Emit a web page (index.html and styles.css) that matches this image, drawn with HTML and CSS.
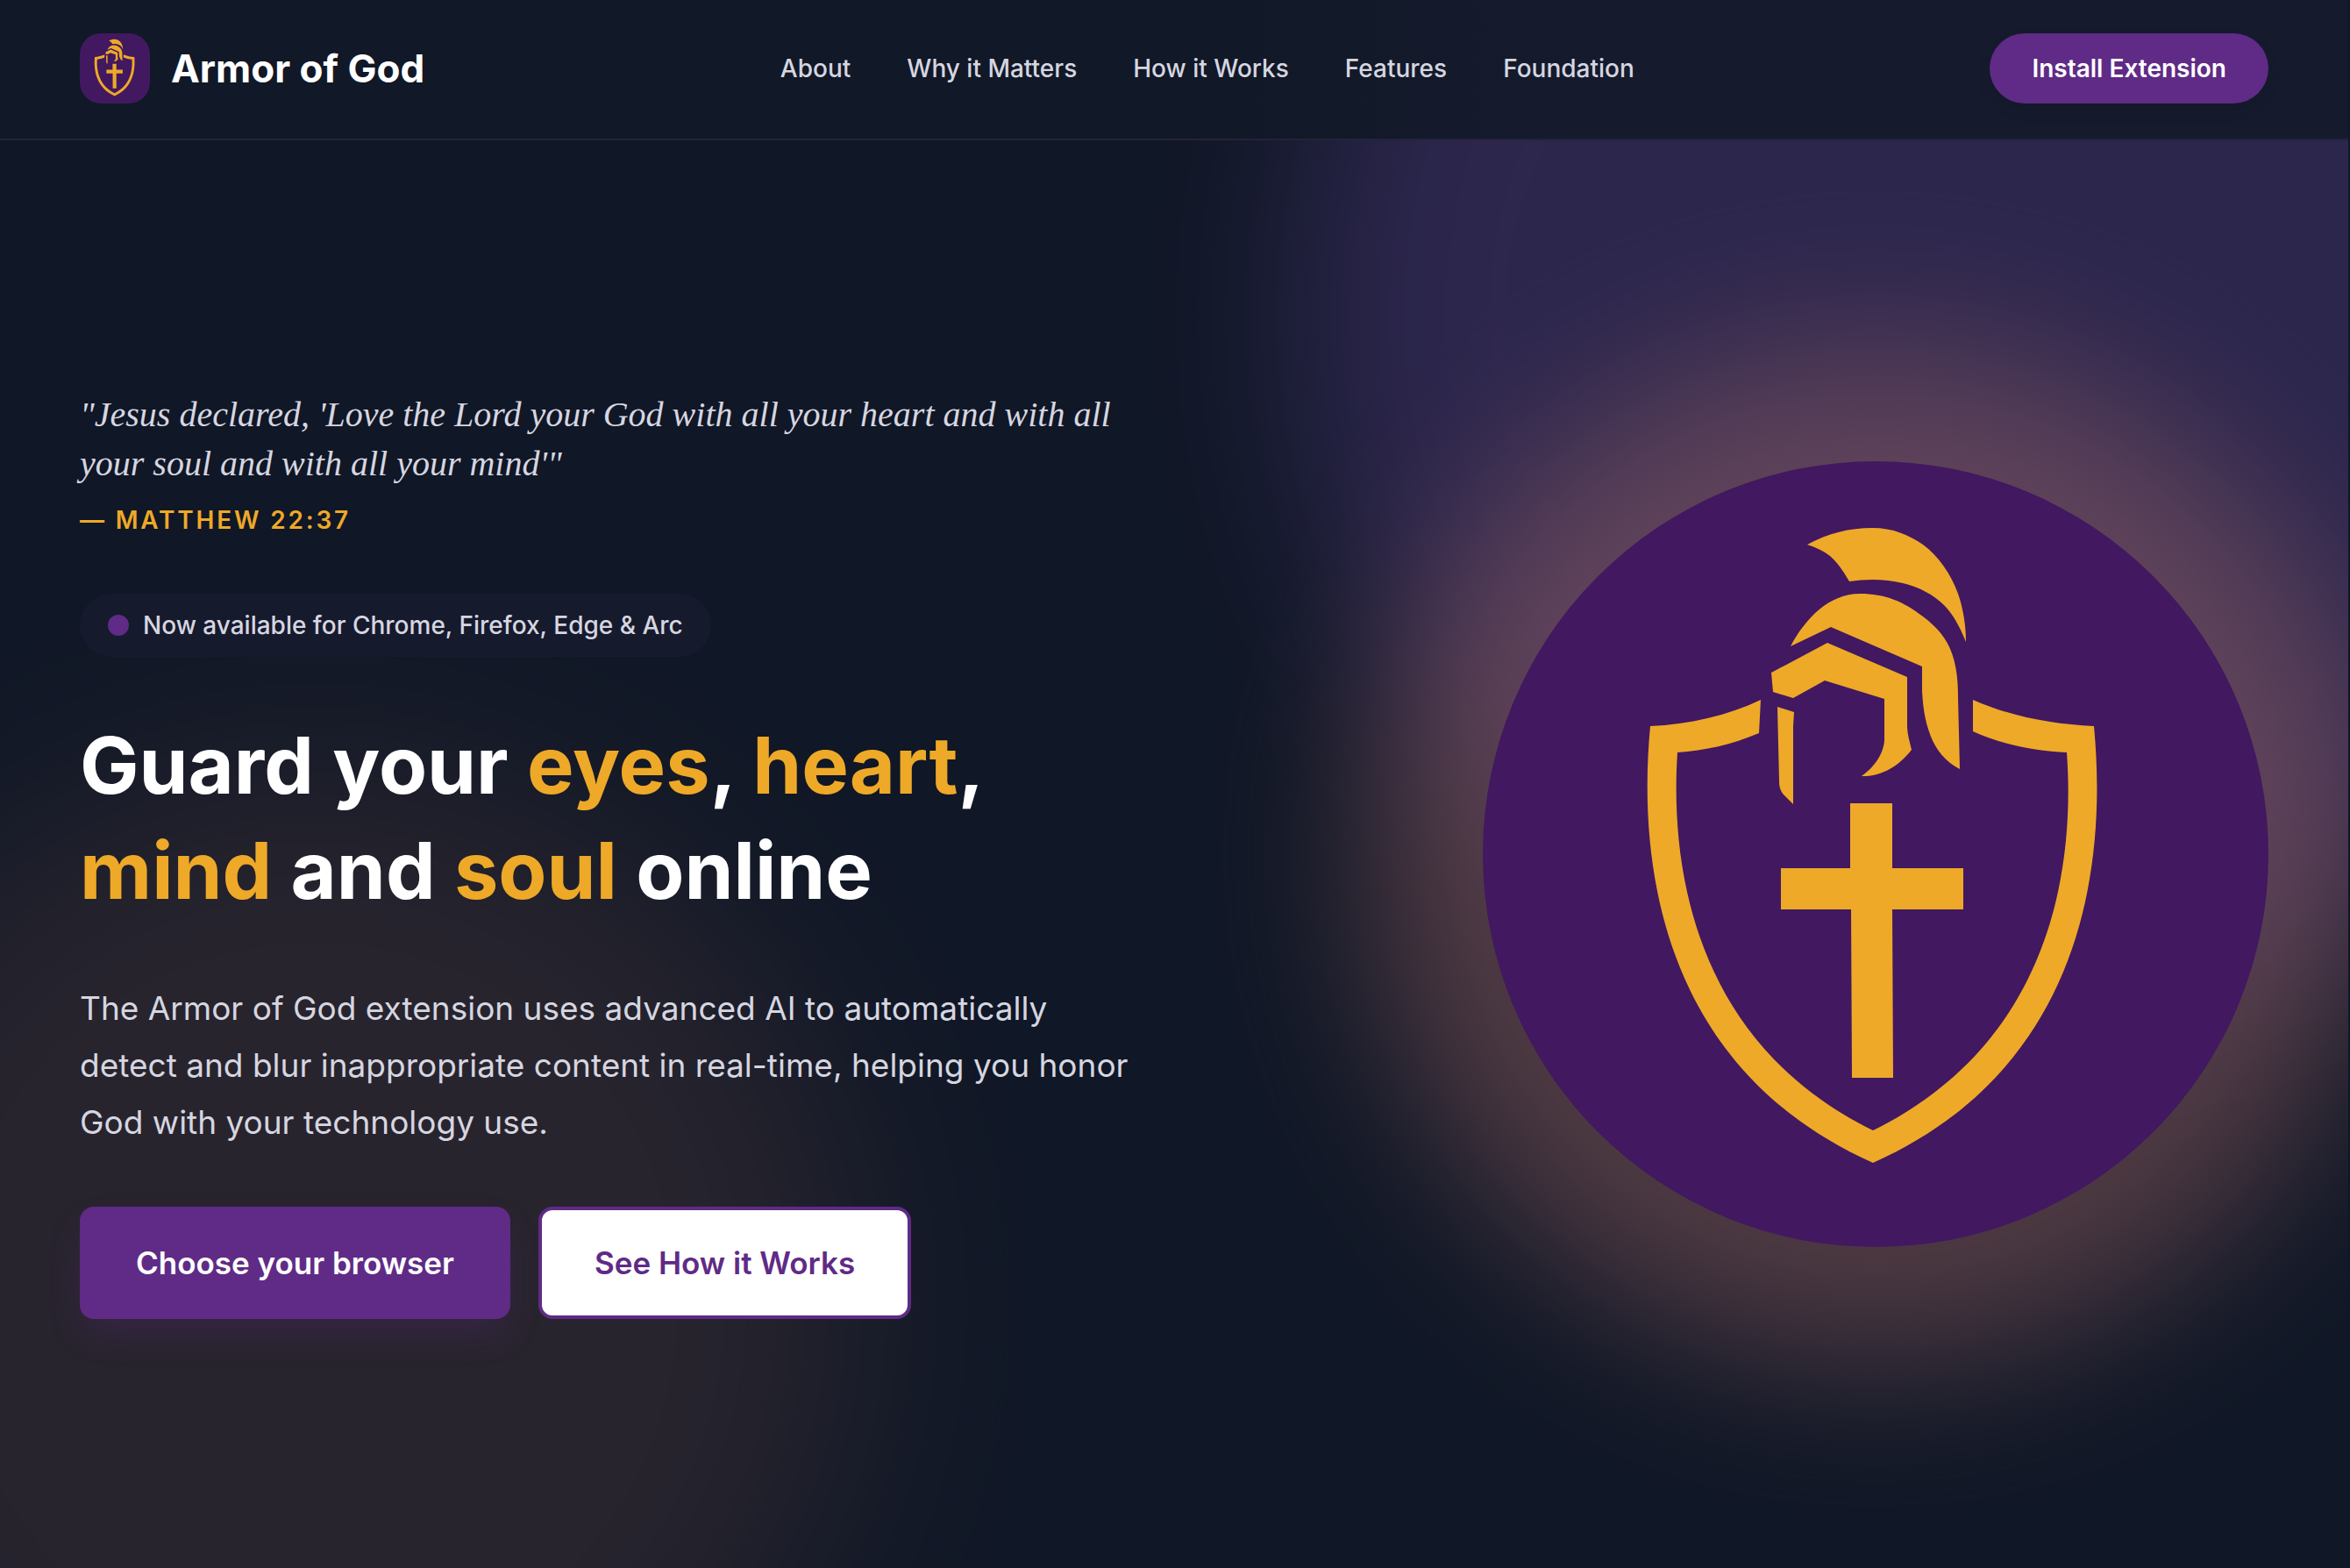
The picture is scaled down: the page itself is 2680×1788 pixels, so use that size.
FILE: index.html
```html
<!DOCTYPE html>
<html lang="en">
<head>
  <meta charset="UTF-8">
  <meta name="viewport" content="width=device-width, initial-scale=1.0">
  <title>Armor of God</title>
  <link rel="stylesheet" href="styles.css">
</head>
<body>
  <svg class="defs" aria-hidden="true">
    <symbol id="armor" viewBox="0 0 896 896">
      <!-- helmet -->
      <path d="M370 95C394 82 418 76 444 76C468 76 486 84 502 95C520 108 534 129 542 151C548 168 551 188 551 206C543 186 536 175 527 165C514 152 497 143 479 139C459 134 438 134 418 137C411 125 405 116 396 108C388 102 380 98 370 95Z"/>
      <path d="M351 211C368 179 395 151 430 151C459 151 480 160 502 177C519 190 529 202 535 219C541 236 542 253 542 270L544 351C528 343 517 329 511 314C503 293 502 277 501 262V234L397 189Z"/>
      <path d="M329 241L393 207L484 246V301C484 311 487 320 489 329C475 347 455 360 432 359C445 350 457 335 458 318V271L390 250L354 270L331 263Z"/>
      <path d="M336 280L355 286L354 302V391L343 380C339 375 338 371 338 364Z"/>
      <!-- shield -->
      <path d="M191 302C235 300 279 290 317 272L315 310C284 323 253 330 222 332C213 470 245 665 445 763C645 665 676 470 666 332C629 330 592 323 559 308V272C602 291 650 300 697 302C713 470 680 695 445 800C210 695 175 470 191 302Z"/>
      <!-- cross -->
      <path d="M419 390H467V464H548V511H467L468 703H421L420 511H340V464H419Z"/>
    </symbol>
  </svg>

  <header class="header">
    <div class="container header-inner">
      <a class="logo" href="#">
        <svg class="logo-icon" aria-hidden="true"><use href="#armor"/></svg>
        <span class="logo-text">Armor of God</span>
      </a>
      <nav class="nav">
        <a href="#about">About</a>
        <a href="#why">Why it Matters</a>
        <a href="#how">How it Works</a>
        <a href="#features">Features</a>
        <a href="#foundation">Foundation</a>
      </nav>
      <a class="install" href="#install">Install Extension</a>
    </div>
  </header>

  <main class="hero">
    <div class="blob blob-purple"></div>
    <div class="blob blob-gold"></div>
    <div class="container hero-inner">
      <div class="hero-text">
        <blockquote class="verse">
          <p>"Jesus declared, 'Love the Lord your God with all your heart and with all your soul and with all your mind'"</p>
          <cite>— MATTHEW 22:37</cite>
        </blockquote>
        <div class="badge"><span class="dot"></span>Now available for Chrome, Firefox, Edge &amp; Arc</div>
        <h1>Guard your <em>eyes</em>, <em>heart</em>, <br><em>mind</em> and <em>soul</em> online</h1>
        <p class="lead">The Armor of God extension uses advanced AI to automatically detect and blur inappropriate content in real-time, helping you honor God with your technology use.</p>
        <div class="actions">
          <button class="btn btn-primary" type="button">Choose your browser</button>
          <button class="btn btn-outline" type="button">See How it Works</button>
        </div>
      </div>
      <div class="emblem">
        <svg class="emblem-icon" viewBox="0 0 896 896" role="img" aria-label="Armor of God emblem"><use href="#armor"/></svg>
      </div>
    </div>
  </main>
</body>
</html>
```

FILE: styles.css
```css
:root {
  --bg: #101726;
  --purple: #5f2b86;
  --deep: #421860;
  --gold: #eea928;
  --text: #d6d6e0;
}
* {
  box-sizing: border-box;
}
body {
  margin: 0;
  min-height: 100vh;
  display: flex;
  flex-direction: column;
  background: var(--bg);
  border-right: 2px solid #101726;
  color: var(--text);
  font-family: Inter, "Liberation Sans", sans-serif;
  font-size: 28px;
  line-height: 40px;
}
a {
  color: inherit;
  text-decoration: none;
}
.defs {
  position: absolute;
  width: 0;
  height: 0;
}
.container {
  width: 100%;
  max-width: 2560px;
  margin: 0 auto;
  padding: 0 32px;
}

/* header */
.header {
  position: relative;
  z-index: 2;
  background: linear-gradient(to right, #111827 52%, #151b2d 68%);
  border-bottom: 2px solid #242338;
}
.header-inner {
  display: flex;
  align-items: center;
  justify-content: space-between;
  padding-top: 38px;
  padding-bottom: 40px;
}
.logo {
  display: flex;
  align-items: center;
  gap: 24px;
}
.logo-icon {
  width: 80px;
  height: 80px;
  border-radius: 24px;
  background: var(--deep);
  fill: var(--gold);
}
.logo-text {
  color: #fff;
  font-size: 44px;
  font-weight: 700;
  line-height: 64px;
}
.nav {
  display: flex;
  gap: 64px;
  font-weight: 500;
}
.install {
  padding: 20px 48px;
  border-radius: 40px;
  background: var(--purple);
  box-shadow: 0 8px 16px rgba(0, 0, 0, 0.1);
  color: #fff;
  font-weight: 600;
}

/* hero */
.hero {
  position: relative;
  flex: 1;
  display: flex;
  align-items: center;
  overflow: hidden;
}
.blob {
  position: absolute;
  border-radius: 50%;
}
.blob-purple {
  top: -600px;
  right: -400px;
  width: 1600px;
  height: 1600px;
  background: #6f4aa8;
  opacity: 0.3;
  filter: blur(96px);
}
.blob-gold {
  left: -260px;
  bottom: -320px;
  width: 1240px;
  height: 1240px;
  background: #f69976;
  opacity: 0.1;
  filter: blur(128px);
}
.hero-inner {
  position: relative;
  display: grid;
  grid-template-columns: 1fr 1fr;
  align-items: center;
  gap: 64px;
}
.verse {
  margin: 0 0 64px;
}
.verse p {
  margin: 0 0 16px;
  font-family: Georgia, "Liberation Serif", serif;
  font-size: 40px;
  font-style: italic;
  line-height: 56px;
}
.verse cite {
  display: block;
  color: var(--gold);
  font-style: normal;
  font-weight: 600;
  letter-spacing: 0.1em;
}
.badge {
  display: inline-flex;
  align-items: center;
  gap: 16px;
  padding: 16px 32px;
  border-radius: 36px;
  background: #161a2d;
  font-weight: 500;
}
.dot {
  width: 24px;
  height: 24px;
  border-radius: 50%;
  background: var(--purple);
}
h1 {
  margin: 64px 0;
  color: #fff;
  font-size: 90px;
  font-weight: 700;
  line-height: 120px;
}
h1 em {
  color: var(--gold);
  font-style: normal;
}
.lead {
  margin: 0 0 64px;
  font-size: 37px;
  line-height: 65px;
}
.actions {
  display: flex;
  gap: 32px;
}
.btn {
  padding: 32px 64px;
  border: 0;
  border-radius: 16px;
  font: inherit;
  font-size: 35px;
  font-weight: 600;
  line-height: 64px;
  cursor: pointer;
}
.btn-primary {
  background: var(--purple);
  box-shadow: 0 20px 40px -8px rgba(95, 43, 134, 0.3);
  color: #fff;
}
.btn-outline {
  padding: 28px 60px;
  border: 4px solid var(--purple);
  background: #fff;
  color: var(--purple);
}
.emblem {
  position: relative;
  justify-self: end;
  width: 100%;
  max-width: 896px;
}
.emblem::before {
  content: "";
  position: absolute;
  inset: -132px;
  border-radius: 50%;
  background: #a86c6c;
  opacity: 0.42;
  filter: blur(92px);
}
.emblem-icon {
  position: relative;
  display: block;
  width: 100%;
  border-radius: 50%;
  background: var(--deep);
  fill: var(--gold);
}
```
